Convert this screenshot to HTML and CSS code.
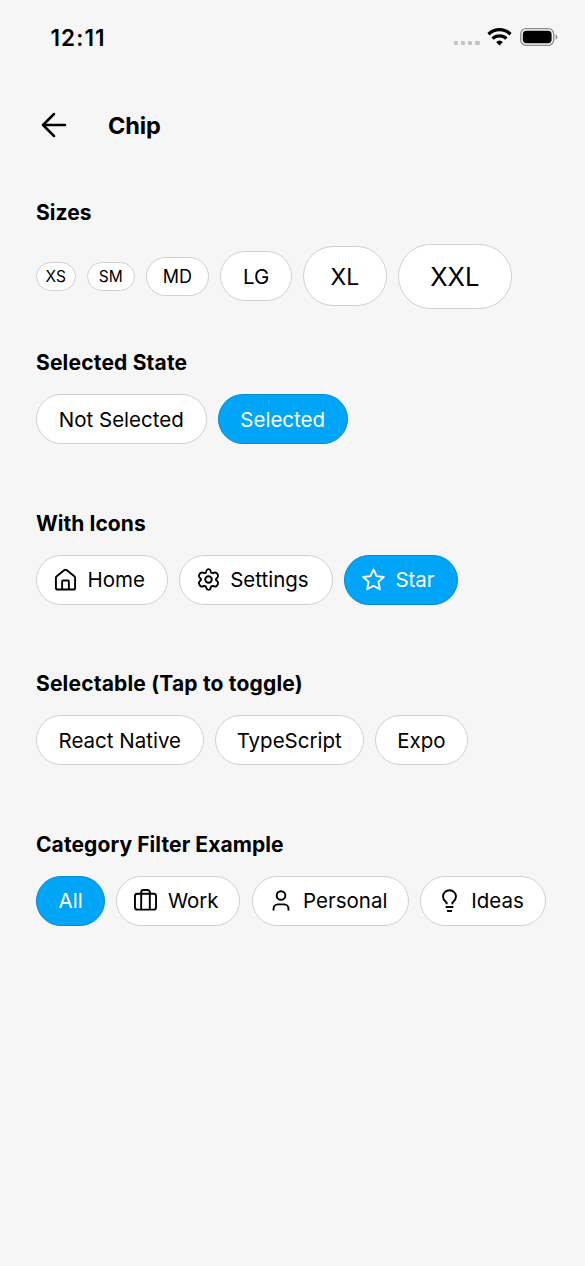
FILE: index.html
```html
<!DOCTYPE html>
<html lang="en">
<head>
<meta charset="utf-8">
<title>Chip</title>
<link rel="stylesheet" href="styles.css">
</head>
<body>
<div class="status">
  <span class="time">12:11</span>
  <div class="indicators">
    <div class="dots"><i></i><i></i><i></i><i></i></div>
    <svg class="wifi" viewBox="0 0 24 18"><path d="M12 17.5 8.6 14.1a5 5 0 0 1 6.8 0Z"/><g fill="none" stroke="#000" stroke-width="3.300"><path d="M1 6.200a15.7 15.7 0 0 1 22 0"/><path d="M5.1 10.7a9.8 9.8 0 0 1 13.8 0"/></g></svg>
    <svg class="battery" viewBox="0 0 38 18"><rect x=".7" y=".7" width="33" height="16.6" rx="5.3" fill="none" stroke="#8b8b8b" stroke-width="1.3"/><rect x="2.8" y="2.8" width="28.8" height="12.4" rx="3.6"/><path d="M35.6 6.2v5.6c2.2-1 2.2-4.6 0-5.6Z" fill="#8b8b8b"/></svg>
  </div>
</div>
<header class="header">
  <svg class="back" viewBox="0 0 26 26"><path d="M24 13H2M13 2 2 13l11 11"/></svg>
  <h1>Chip</h1>
</header>
<main>
  <section class="sizes">
    <h2>Sizes</h2>
    <div class="row">
      <span class="chip xs">XS</span>
      <span class="chip sm">SM</span>
      <span class="chip md">MD</span>
      <span class="chip lg">LG</span>
      <span class="chip xl">XL</span>
      <span class="chip xxl">XXL</span>
    </div>
  </section>
  <section>
    <h2 class="wide">Selected State</h2>
    <div class="row">
      <span class="chip not-selected">Not Selected</span>
      <span class="chip selected sel">Selected</span>
    </div>
  </section>
  <section>
    <h2>With Icons</h2>
    <div class="row">
      <span class="chip icon home"><svg viewBox="0 0 24 24"><path d="M2 10.300a2 2 0 0 1 .8-1.600L10.900 2.200a2 2 0 0 1 2.200 0L21.200 8.700a2 2 0 0 1 .8 1.600V20.500a2 2 0 0 1-2 2H4a2 2 0 0 1-2-2Z"/><path d="M8.500 22v-8a1 1 0 0 1 1-1h5a1 1 0 0 1 1 1V22"/></svg>Home</span>
      <span class="chip icon settings"><svg viewBox="0 0 24 24"><path d="M9.7 3.2Q10.1 1.2 12 1.2T14.3 3.2L14.5 4.1Q15 5.7 16.8 5.2L18 4.8Q19.9 4.2 20.9 5.8L21.7 7.1Q22.7 8.8 21.2 10.1L20.5 10.7Q19.2 12 20.5 13.3L21.2 13.9Q22.7 15.2 21.7 16.9L20.9 18.2Q19.9 19.8 18 19.2L16.8 18.8Q15 18.3 14.5 19.9L14.3 20.8Q13.9 22.8 12 22.8T9.7 20.8L9.5 19.9Q9 18.3 7.2 18.8L6 19.2Q4.100 19.8 3.100 18.2L2.300 16.9Q1.300 15.2 2.800 13.9L3.500 13.3Q4.800 12 3.500 10.7L2.800 10.1Q1.300 8.800 2.300 7.100L3.100 5.800Q4.100 4.200 6 4.800L7.200 5.200Q9 5.700 9.500 4.100Z"/><circle cx="12" cy="12" r="3.400"/></svg>Settings</span>
      <span class="chip icon selected star"><svg viewBox="0 0 24 24"><path d="m12 1.500 3.200 7 7.500.9-5.600 5.100 1.500 7.700-6.600-3.700-6.600 3.700 1.500-7.700-5.600-5.100 7.500-.9Z"/></svg>Star</span>
    </div>
  </section>
  <section>
    <h2 class="wide">Selectable (Tap to toggle)</h2>
    <div class="row">
      <span class="chip react">React Native</span>
      <span class="chip typescript">TypeScript</span>
      <span class="chip expo">Expo</span>
    </div>
  </section>
  <section>
    <h2 class="filter">Category Filter Example</h2>
    <div class="row">
      <span class="chip selected all">All</span>
      <span class="chip icon work"><svg viewBox="0 0 24 24"><rect x="1" y="5" width="22" height="16.500" rx="2.500"/><path d="M7.500 21.500V3.500a2.500 2.500 0 0 1 2.500-2.500h4a2.500 2.500 0 0 1 2.500 2.500v18"/></svg>Work</span>
      <span class="chip icon personal"><svg viewBox="0 0 24 24"><circle cx="11.500" cy="6.800" r="4.500"/><path d="M3.700 22.500v-2a4.500 4.500 0 0 1 4.500-4.500h6.600a4.500 4.500 0 0 1 4.500 4.500v2"/></svg>Personal</span>
      <span class="chip icon ideas"><svg viewBox="0 0 24 24"><path d="M9 16v-1.700C7.200 12.500 5.200 11 5.200 7.800a6.800 6.500 0 0 1 13.600 0c0 3.200-2 4.700-3.800 6.500V16M8 18.700h8M9.500 23h5"/></svg>Ideas</span>
    </div>
  </section>
</main>
</body>
</html>
```
FILE: styles.css
```css
* { box-sizing: border-box; }
body { margin: 0; width: 585px; height: 1266px; background: #f6f6f6; color: #000; font-family: Inter, "Liberation Sans", sans-serif; overflow: hidden; }
.status { height: 74px; padding: 0 27px 0 50.500px; display: flex; align-items: center; justify-content: space-between; }
.time { font-size: 22.5px; font-weight: 570; letter-spacing: 1.100px; }
.indicators { display: flex; align-items: center; }
.dots { display: flex; gap: 2.5px; margin: 12px 7.500px 0 0; }
.dots i { width: 4.600px; height: 4.600px; border-radius: 1px; background: #c3c3c3; }
.wifi { width: 25px; height: 18px; margin-right: 8px; }
.battery { width: 38px; height: 18px; }
.header { height: 102px; padding-left: 41px; display: flex; align-items: center; }
.back { width: 26px; height: 26px; margin-right: 41px; fill: none; stroke: #000; stroke-width: 2.500; stroke-linecap: round; stroke-linejoin: round; }
h1 { margin: 0; font-size: 23.500px; font-weight: 650; letter-spacing: -0.100px; }
main { padding: 24px 36px 0; }
section { height: 160.500px; }
.sizes { height: 150.500px; }
h2 { margin: 0 0 19px; padding-top: 0.500px; font-size: 21px; line-height: 24px; font-weight: 650; letter-spacing: 0.050px; white-space: nowrap; }
.wide { letter-spacing: 0.180px; }
.filter { letter-spacing: 0.090px; }
.row { display: flex; gap: 11.200px; align-items: center; }
.chip { flex: none; height: 50px; padding-top: 2px; border: 1px solid #d0d0d0; border-radius: 33px; background: #fff; font-size: 20.500px; font-weight: 370; line-height: 1; display: flex; align-items: center; justify-content: center; white-space: nowrap; }
.chip svg { width: 23px; height: 23px; margin: -2px 10.500px 0 0; fill: none; stroke: currentColor; stroke-width: 2; stroke-linejoin: round; flex: none; }
.icon { justify-content: flex-start; padding-left: 17px; }
.selected { background: #00a5f8; border-color: #0789cd; color: #fff; }
.xs { width: 39.500px; height: 29px; font-size: 15.500px; }
.sm { width: 48px; height: 29px; font-size: 15.500px; }
.md { width: 63px; height: 39px; font-size: 18px; }
.lg { width: 72px; }
.xl { width: 83.300px; height: 60px; font-size: 23px; }
.xxl { width: 114px; height: 65px; font-size: 25.500px; }
.not-selected { width: 170.500px; }
.sel { width: 130px; }
.home { width: 131.500px; }
.settings { width: 154px; }
.star { width: 114.500px; }
.react { width: 167.500px; }
.typescript { width: 149px; }
.expo { width: 93px; }
.all { width: 69.200px; }
.work { width: 124px; }
.personal { width: 157px; }
.ideas { width: 126px; }
```
